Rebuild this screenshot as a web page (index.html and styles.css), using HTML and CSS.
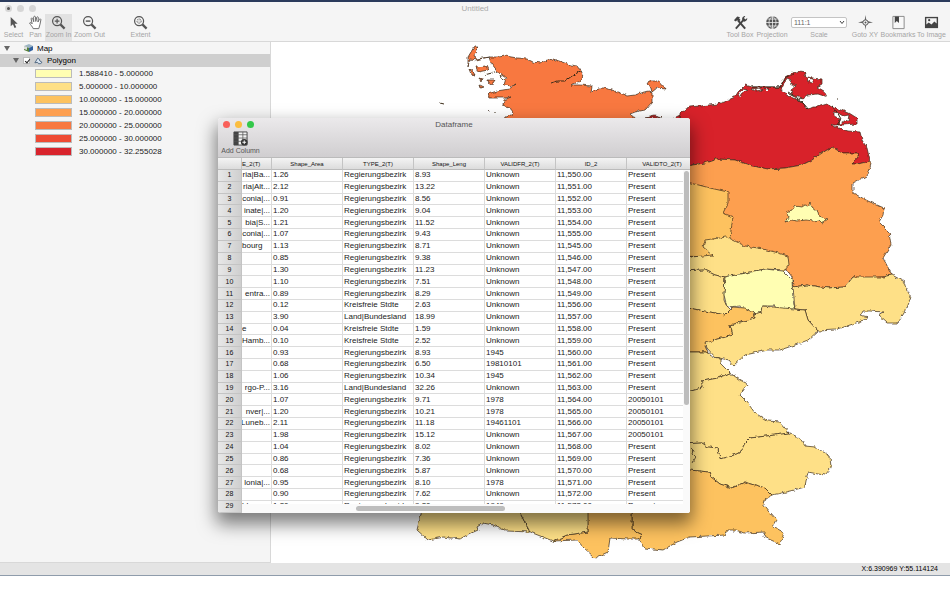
FILE: index.html
```html
<!doctype html>
<html lang="en">
<head>
    <meta charset="UTF-8">
    <meta name="viewport" content="width=device-width, initial-scale=1.0">
    <title>Untitled</title>
    <link rel="stylesheet" href="styles.css">
</head>
<body>
<div class="app">
    <header class="titlebar">
        <div class="lights inactive"><span class="dirty"></span><span></span><span></span></div>
        <h1>Untitled</h1>
    </header>
    <div class="toolbar">
        <button class="tool w-select">
            <svg viewBox="0 0 16 16"><path d="M5 2v10l2.400-2.200 1.700 4 1.800-.8-1.700-3.800h3.200z" fill="#555"/></svg>
            Select
        </button>
        <button class="tool w-pan">
            <svg viewBox="0 0 16 16"><path d="M5.500 14.500c-.5-2-3-4-3.800-6 .6-1 1.800-.4 2.700.9L3.300 4c.2-1.200 1.500-1 1.800 0l1 3.200L6 2.200C6.300 1 7.700 1 8 2.200l.3 4.700 1-4.400c.5-1 1.700-.7 1.700.4L10.600 7.500l1.600-3c.6-.8 1.700-.3 1.500.8-.6 3-1 6-2.200 9.200z" fill="#fff" stroke="#666"/></svg>
            Pan
        </button>
        <button class="tool w-zoom active">
            <svg viewBox="0 0 16 16"><circle cx="6.500" cy="6.500" r="4.800" fill="none" stroke="#555" stroke-width="1.300"/><path d="M4 6.500h5M6.500 4v5" stroke="#555" stroke-width="1.300"/><path d="M10 10l4.500 4.500" stroke="#555" stroke-width="2.400"/></svg>
            Zoom In
        </button>
        <button class="tool w-out">
            <svg viewBox="0 0 16 16"><circle cx="6.500" cy="6.500" r="4.800" fill="none" stroke="#555" stroke-width="1.300"/><path d="M4 6.500h5" stroke="#555" stroke-width="1.500"/><path d="M10 10l4.500 4.500" stroke="#555" stroke-width="2.400"/></svg>
            Zoom Out
        </button>
        <button class="tool w-extent">
            <svg viewBox="0 0 16 16"><circle cx="6.500" cy="6.500" r="4.800" fill="none" stroke="#555" stroke-width="1.300"/><circle cx="6.500" cy="6.500" r="2.300" fill="#ddd" stroke="#666" stroke-dasharray="1.500 1"/><path d="M10 10l4.500 4.500" stroke="#555" stroke-width="2.400"/></svg>
            Extent
        </button>
        <span class="spacer"></span>
        <button class="tool w-box">
            <svg viewBox="0 0 16 16"><path d="M3 14.500l8-9" stroke="#444" stroke-width="2"/><path d="M5.500 6l7.500 8.500" stroke="#444" stroke-width="2.200"/><path d="M1 5.500l3.500-4 3 1-1 1 1.500 1.700-2 1.800-1.700-1.500-1.300 1.500zM10 5.500c-1-2 1-4.500 3-4.300l-1.300 2 1.500 1.500 2-1.500c.3 2.500-2 4.300-4 3.800z" fill="#444"/></svg>
            Tool Box
        </button>
        <button class="tool w-proj">
            <svg viewBox="0 0 16 16"><circle cx="8" cy="8" r="6.800" fill="#555"/><path d="M1 8h14M2.500 4.300h11M2.500 11.700h11M8 1v14M8 1c-5 4-5 10 0 14M8 1c5 4 5 10 0 14" fill="none" stroke="#f4f4f4" stroke-width=".8"/></svg>
            Projection
        </button>
        <div class="tool w-scale">
            <div class="scale-box">
                <select id="scale"><option>111:1</option></select>
                <svg viewBox="0 0 8 8"><path d="M2 3l2 2.500L6 3" fill="none" stroke="#444"/></svg>
            </div>
            <label for="scale">Scale</label>
        </div>
        <button class="tool w-goto">
            <svg viewBox="0 0 16 16"><path d="M8 0l1 6 7 2-7 1-1 7-1-7-7-1 7-2z" fill="#666"/><circle cx="8" cy="8" r="2.800" fill="#f4f4f4" stroke="#555"/><circle cx="8" cy="8" r="1" fill="#555"/></svg>
            Goto XY
        </button>
        <button class="tool w-mark">
            <svg viewBox="0 0 16 16"><path d="M2 1.500h12v13H2z" fill="#f8f8f8" stroke="#888"/><path d="M4 1.500h4.500v7L6.200 6.500 4 8.500z" fill="#444"/></svg>
            Bookmarks
        </button>
        <button class="tool w-image">
            <svg viewBox="0 0 16 16"><path d="M1 2h14v12H1z" fill="#444"/><path d="M2.500 3.500h11V9L11 7l-3 3-3-2-2.500 2z" fill="#f4f4f4"/><circle cx="5.500" cy="5.500" r="1.200" fill="#444"/></svg>
            To Image
        </button>
    </div>

    <main class="content">
        <aside class="layers">
            <div class="node root">
                <span class="arrow"></span>
                <svg class="cube" viewBox="0 0 10 8"><path d="M1 2l5-2 4 2-4 2z" fill="#9cb4c4"/><path d="M1 2l5 2v4L1 6z" fill="#557f3c"/><path d="M1 2l3 1v3L1 5z" fill="#ddd"/><path d="M6 4l4-2v4L6 8z" fill="#2f5f9e"/></svg>
                <span>Map</span>
            </div>
            <div class="node layer">
                <span class="arrow"></span>
                <input type="checkbox" id="polygon" checked>
                <svg class="shape" viewBox="0 0 10 8"><path d="M1 6l3-5 2 1 .5 2L9 5.500 7 7H5L4 5.500z" fill="#dbe6f2" stroke="#47617c"/></svg>
                <label for="polygon">Polygon</label>
            </div>
            <ul class="legend">
                <li><i class="c1"></i>1.588410 - 5.000000</li>
                <li><i class="c2"></i>5.000000 - 10.000000</li>
                <li><i class="c3"></i>10.000000 - 15.000000</li>
                <li><i class="c4"></i>15.000000 - 20.000000</li>
                <li><i class="c5"></i>20.000000 - 25.000000</li>
                <li><i class="c6"></i>25.000000 - 30.000000</li>
                <li><i class="c7"></i>30.000000 - 32.255028</li>
            </ul>
        </aside>
        <section class="map">
            <svg viewBox="271 42 679 521" preserveAspectRatio="xMinYMin slice">
                <defs>
                    <filter id="coast" x="-5%" y="-5%" width="110%" height="110%">
                        <feTurbulence type="fractalNoise" baseFrequency=".22" numOctaves="2" seed="4"/>
                        <feDisplacementMap in="SourceGraphic" scale="4" xChannelSelector="R" yChannelSelector="G"/>
                    </filter>
                </defs>
                <g class="regions" filter="url(#coast)">
                    <!-- Schleswig-Holstein -->
                    <path class="c5" d="M489 57L497 57 506 56 517 58 527 59 533 62 540 63 543 61 553 59 562 62 570 65 577 66 580 70 583 74 582 80 576 83 571 85 580 85 592 86 591 94 597 88 604 88 612 90 620 93 627 96 635 95 643 92 650 91 652 93 652 102 645 110 635 112 630 114 632 117 640 120V130H500L504 118 513 114 510 107 503 105 504 100 511 97 505 98 490 98 488 94 497 91 509 89 516 84 512 86 504 85 506 78 500 74 495 68 491 63z"/>
                    <path class="c5" d="M652 92L651 87 647 84 649 81 659 81 666 89 657 88z"/>
                    <path class="c5" d="M474 47L479 47 476 50 474 55 476 59 489 57 476 60 470 59 468 66 468 57z"/>
                    <path class="c5" d="M476 67l10-1 2 4-10 2zM469 69l3 1 3 5-4-1zM488 80l7 0-2 3-4 1zM479 78l3 1-1 3zM480 85l4 2-3 1z"/>
                    <path class="line thick" d="M551 83L558 81 565 81 572 76 582 70M484 75l8-2 5-2M440 103l4 1M488 110l2 1M494 112l2 0M500 75l3 5"/>
                    <!-- Mecklenburg-Vorpommern -->
                    <path class="c7" d="M680 112L690 107 700 106 718 104 726 101 735 97 738 92 745 85 752 87 780 87 782 83 785 77 792 73 800 71 806 72 804 76 812 78 822 79 822 84 817 87 824 91 827 97 818 94 808 95 803 99 797 98 803 103 808 109 812 107 817 107 827 104 830 105 838 109 849 113 857 118 857 124 842 125 832 125 838 128 848 131 860 132 862 140 867 148 870 161 858 164 852 164 858 157 858 153 842 153 832 147 822 153 812 160 802 165 785 168 768 169 752 166 735 160 717 159 705 163 680 167z"/>
                    <path class="water" d="M738 95l4-6 6 1-6 3-3 4zM752 89l8-1 3 2-8 1zM764 89l6 0-3 3zM784 84l3-6 4 2-1 4 6 2-5 4 1 5 9 3-3 2-10-4-7-6zM807 78l5 1 2 5-6-3zM834 112l4 1 5 3 6-1-1 5-5 2-4 3 1-6-6-3z"/>
                    <path class="c7" d="M645 118l9-2 8 2zM672 119l8-4v5z"/>
                    <path class="line thick" d="M780 87l6-10 8-3M789 94l8 4 6 5 5 6M832 106l5 6 4 7-4 6M788 92l5 3M837 99h1M752 87h30"/>
                    <!-- Brandenburg, Berlin -->
                    <path class="c4" d="M680 167L705 163 717 159 735 160 752 166 768 169 785 168 802 165 812 160 822 153 832 147 842 153 858 153 858 157 852 164 858 164 870 161 871 164 868 175 853 183 853 193 868 201 884 208 883 215 879 222 889 232 891 245 883 258 892 275 883 277 867 278 853 277 845 287 828 288 807 285 793 287 792 277 787 270 680 260z"/>
                    <path class="c1" d="M785 222L788 217 787 212 792 210 795 206 801 207 804 205 808 206 810 203 812 207 818 212 819 216 828 219 822 223 819 220 813 221 806 220 798 221 791 220z"/>
                    <!-- Niedersachsen, Sachsen-Anhalt -->
                    <path class="c3" d="M680 180L691 183 710 188 728 192 728 203 723 213 733 217 730 238 713 257 680 256z"/>
                    <path class="c2" d="M680 256L691 257 713 255 703 247 705 240 727 237 745 246 758 248 775 252 788 256 789 265 785 270 765 269 745 273 725 277 715 275 705 270 680 271z"/>
                    <path class="c2" d="M680 271L705 270 715 275 725 277 724 300 727 307 730 310 725 315 700 310 680 307z"/>
                    <path class="c1" d="M725 277L745 273 765 269 783 271 792 280 793 300 795 310 775 309 775 306 763 306 760 313 753 314 740 306 727 307 724 295z"/>
                    <!-- Sachsen, Thueringen -->
                    <path class="c3" d="M680 307L700 310 725 315 730 310 733 307 745 308 755 314 755 318 730 325 733 335 715 340 705 345 708 352 680 352z"/>
                    <path class="c2" d="M793 287L807 285 828 288 845 287 853 277 883 277 892 275 905 282 908 292 911 297 907 308 898 323 887 323 878 315 883 312 870 311 862 311 860 315 868 317 862 321 835 330 818 331 808 320 805 310 795 309z"/>
                    <path class="c2" d="M755 314L761 312 762 306 783 308 805 310 808 320 818 331 808 340 795 345 780 350 768 350 745 355 733 366 728 360 715 357 707 348 705 343 715 340 733 335 730 325 755 318z"/>
                    <!-- Bayern -->
                    <path class="c2" d="M680 352L708 352 712 357 720 358 720 363 730 373 718 378 702 381 702 388 680 394z"/>
                    <path class="c2" d="M730 373L740 380 748 384 740 395 747 402 755 413 768 421 780 422 789 433 775 435 750 438 745 443 740 453 720 459 718 448 708 447 702 443 680 444V394L702 388 702 381 718 378z"/>
                    <path class="c2" d="M789 433L800 438 805 446 815 447 830 456 831 468 825 475 818 474 808 472 805 487 790 491 772 495 765 488 745 482 732 488 720 484 711 477 709 472 680 469V444L702 443 708 447 718 448 720 459 740 453 745 443 750 438 775 435z"/>
                    <path class="line" d="M691 448l3 3-1 3 3 3-4 6"/>
                    <path class="c3" d="M632 500V513L632 530 643 535 637 538 645 548 663 550 677 542 690 537 725 535 728 530 735 530 745 533 765 532 764 537 780 544 784 533 773 527 777 520 770 512 762 502 772 495 765 488 745 482 732 488 720 484 711 477 709 472 680 469z"/>
                    <path class="c3" d="M587 500L588 532 567 535 553 541 577 540 583 547 595 558 608 552 610 538 627 539 637 539 643 535 632 530V500z"/>
                    <!-- Baden-Wuerttemberg -->
                    <path class="c2" d="M422 510L417 530 428 540 443 537 460 539 467 535 478 530 477 527 483 523 493 525 507 531 530 532 520 513V500H422z"/>
                    <path class="c2" d="M520 500V513L530 532 553 541 567 535 588 532V500z"/>
                </g>
            </svg>
        </section>
    </main>
    <footer class="status">X:6.390969 Y:55.114124</footer>

    <section class="dialog">
        <header class="dialog-head">
            <div class="titlebar">
                <div class="lights"><span class="red"></span><span class="yellow"></span><span class="green"></span></div>
                <h2>Dataframe</h2>
            </div>
            <button class="add">
                <svg viewBox="0 0 16 16"><path d="M1 1h14v14H1z" fill="#f2f2f2" stroke="#444"/><path d="M1 1h5v14H1z" fill="#444"/><path d="M1 4h14M1 7.500h14M1 11h14M10.500 1v14" stroke="#555" stroke-width=".8"/><circle cx="12" cy="12" r="3.500" fill="#333"/><path d="M12 10v4M10 12h4" stroke="#fff"/></svg>
                Add Column
            </button>
        </header>
        <div class="sheet">
            <table>
                <thead>
                <tr>
                    <th class="num"></th>
                    <th class="name">E_2(T)</th>
                    <th>Shape_Area</th>
                    <th>TYPE_2(T)</th>
                    <th>Shape_Leng</th>
                    <th>VALIDFR_2(T)</th>
                    <th>ID_2</th>
                    <th>VALIDTO_2(T)</th>
                </tr>
                </thead>
                <tbody id="rows"></tbody>
            </table>
            <div class="track-v"><span></span></div>
            <div class="track-h"><span></span></div>
        </div>
    </section>
</div>
<script src="script.js"></script>
</body>
</html>
```
FILE: styles.css
```css
* {
    box-sizing: border-box;
    margin: 0;
    padding: 0;
    list-style: none;
}

body {
    font-family: "Liberation Sans", Arial, sans-serif;
    font-size: 8px;
    color: #222;
    background-color: #fff;
}

button {
    border: 0;
    background: none;
    font-family: inherit;
}

.app {
    position: relative;
    display: flex;
    flex-direction: column;
    height: calc(100vh - 18px);
    border-top: 2px solid #2b3b5c;
    border-bottom: 1px solid #8f9cab;
    background-color: #f5f5f5;
}

/* title bars */
.titlebar {
    display: grid;
    grid-template-columns: 60px 1fr 60px;
    align-items: center;
    height: 12px;
    padding: 0 5px;
}

.titlebar h1,
.titlebar h2 {
    font-size: 8px;
    font-weight: normal;
    text-align: center;
    color: #555;
}

.titlebar h1 {
    color: #aaa;
}

.lights {
    display: flex;
    gap: 5px;
}

.lights span {
    width: 7px;
    height: 7px;
    border-radius: 50%;
}

.lights.inactive span {
    background-color: #d6d6d6;
}

.lights.inactive .dirty {
    border: 2px solid #d6d6d6;
    background-color: #555;
}

.lights .red {
    background-color: #f9605a;
}

.lights .yellow {
    background-color: #fbbd3f;
}

.lights .green {
    background-color: #34c84a;
}

/* toolbar */
.toolbar {
    display: flex;
    height: 28px;
    padding: 0 3px 0 1px;
    border-bottom: 1px solid #d8d8d8;
}

.spacer {
    flex: 1;
}

.tool {
    display: flex;
    flex-direction: column;
    align-items: center;
    gap: 1px;
    padding-top: 1px;
    font-size: 7px;
    line-height: 8px;
    white-space: nowrap;
    color: #a5a5a5;
}

.tool > svg {
    width: 15px;
    height: 15px;
}

.tool.active {
    background-color: #e2e2e2;
}

.w-select {
    width: 25px;
}

.w-pan {
    width: 19px;
}

.w-zoom {
    width: 27px;
}

.w-out {
    width: 35px;
}

.w-extent {
    width: 27px;
    margin-left: 20px;
}

.w-box,
.w-proj {
    width: 32px;
}

.w-scale {
    width: 62px;
}

.w-goto {
    width: 30px;
}

.w-mark {
    width: 36px;
}

.w-image {
    width: 31px;
}

.scale-box {
    position: relative;
    width: 56px;
    height: 15px;
    padding: 2px 0;
}

.scale-box select {
    display: block;
    width: 100%;
    height: 11px;
    padding-left: 2px;
    appearance: none;
    border: 1px solid #c4c4c4;
    border-radius: 2px;
    background-color: #fff;
    font: 7px "Liberation Sans", Arial, sans-serif;
    color: #666;
}

.scale-box svg {
    position: absolute;
    top: 3px;
    right: 1px;
    width: 8px;
    height: 8px;
}

/* layer tree */
.content {
    flex: 1;
    display: flex;
    min-height: 0;
}

.layers {
    width: 271px;
    border-right: 1px solid #d8d8d8;
    border-bottom: 1px solid #d8d8d8;
}

.node {
    display: flex;
    align-items: center;
    gap: 4px;
    height: 13px;
    color: #000;
}

.root {
    height: 12px;
    padding-left: 4px;
}

.layer {
    padding-left: 13px;
    background-color: #cfcfcf;
}

.arrow {
    border: 3px solid transparent;
    border-top: 5px solid #666;
    border-bottom: 0;
}

.cube {
    width: 10px;
    height: 8px;
    margin-left: 9px;
}

.shape {
    width: 9px;
    height: 8px;
}

.layer input {
    position: relative;
    width: 7px;
    height: 7px;
    appearance: none;
    border: 1px solid #bbb;
    background-color: #fff;
}

.layer input:checked::after {
    content: "";
    position: absolute;
    left: 2px;
    width: 2px;
    height: 4px;
    border: solid #222;
    border-width: 0 1px 1px 0;
    transform: rotate(40deg);
}

.legend li {
    display: flex;
    align-items: center;
    gap: 7px;
    height: 13px;
    padding-left: 35px;
}

.legend i {
    width: 37px;
    height: 9px;
    border: 1px solid #bbb;
}

.legend .c1 { background-color: #fffeb2; }
.legend .c2 { background-color: #fee087; }
.legend .c3 { background-color: #fdc25f; }
.legend .c4 { background-color: #fd9f50; }
.legend .c5 { background-color: #f87840; }
.legend .c6 { background-color: #ee4a33; }
.legend .c7 { background-color: #d8232c; }

/* map */
.map {
    flex: 1;
    overflow: hidden;
    background-color: #fff;
}

.map svg {
    display: block;
    width: 100%;
    height: 100%;
}

.regions path {
    stroke: #3a2a18;
    stroke-width: .7;
    stroke-linejoin: round;
}

.regions .c1 { fill: #fffeb2; }
.regions .c2 { fill: #fee087; }
.regions .c3 { fill: #fdc25f; }
.regions .c4 { fill: #fd9f50; }
.regions .c5 { fill: #f87840; }
.regions .c7 { fill: #d8232c; }
.regions .water { fill: #fff; }
.regions .line { fill: none; }
.regions .thick { stroke-width: 1; }

.status {
    height: 12px;
    padding-right: 12px;
    background-color: #e4e4e4;
    font-size: 7px;
    line-height: 12px;
    text-align: right;
    color: #000;
}

/* dataframe window */
.dialog {
    position: absolute;
    top: 116px;
    left: 218px;
    display: flex;
    flex-direction: column;
    width: 472px;
    height: 395px;
    border-radius: 3px;
    overflow: hidden;
    background-color: #fff;
    box-shadow: 0 9px 18px 2px rgba(0, 0, 0, .5);
}

.dialog-head {
    height: 40px;
    border-bottom: 1px solid #bbb;
    background-image: linear-gradient(#ebe9eb, #d0ced0);
}

.dialog .titlebar {
    height: 13px;
}

.add {
    display: flex;
    flex-direction: column;
    align-items: center;
    width: 45px;
    font-size: 7px;
    line-height: 9px;
    color: #555;
}

.add svg {
    width: 15px;
    height: 15px;
}

.sheet {
    position: relative;
    flex: 1;
    overflow: hidden;
}

/* the rows share out the height of the table */
table {
    width: 479px;
    height: 355px;
    table-layout: fixed;
    border-collapse: separate;
    border-spacing: 0;
}

th {
    width: 71px;
    height: 12px;
    border-right: 1px solid #c4c4c4;
    border-bottom: 1px solid #bbb;
    background-image: linear-gradient(#f4f4f4, #dcdcdc);
    font-size: 6px;
    font-weight: normal;
    line-height: 8px;
    color: #111;
}

td {
    height: 11px;
    padding-left: 1px;
    border-right: 1px solid #dcdcdc;
    border-bottom: 1px solid #dcdcdc;
    font-size: 8px;
    line-height: 10px;
    white-space: nowrap;
    overflow: hidden;
}

.num {
    width: 24px;
}

tbody .num {
    height: 11px;
    border-color: #c4c4c4;
    background-image: linear-gradient(to right, #e8e8e8, #cfcfcf);
    font-size: 7px;
}

.name {
    width: 30px;
    padding: 0;
    text-align: left;
}

.name div {
    display: flex;
    overflow: hidden;
}

.name .cut {
    justify-content: flex-end;
    padding-right: 1px;
}

.track-v,
.track-h {
    position: absolute;
    background-color: #fafafa;
}

.track-v {
    top: 12px;
    right: 0;
    bottom: 0;
    width: 7px;
    padding: 1px;
}

.track-h {
    left: 24px;
    right: 0;
    bottom: 0;
    height: 9px;
    padding: 2px 0 2px 114px;
}

.track-v span,
.track-h span {
    display: block;
    border-radius: 3px;
    background-color: #bdbdbd;
}

.track-v span {
    width: 5px;
    height: 234px;
}

.track-h span {
    width: 149px;
    height: 5px;
}
```
FILE: script.js
```javascript
// name, area, type, length, valid from, id, valid to
let R = 'Regierungsbezirk';
let K = 'Kreisfreie Stdte';
let L = 'Land|Bundesland';
let data = [
    ['ria|Ba...', '1.26', R, '8.93', 'Unknown', '11,550.00', 'Present'],
    ['ria|Alt...', '2.12', R, '13.22', 'Unknown', '11,551.00', 'Present'],
    ['conia|...', '0.91', R, '8.56', 'Unknown', '11,552.00', 'Present'],
    ['inate|...', '1.20', R, '9.04', 'Unknown', '11,553.00', 'Present'],
    ['bia|S...', '1.21', R, '11.52', 'Unknown', '11,554.00', 'Present'],
    ['conia|...', '1.07', R, '9.43', 'Unknown', '11,555.00', 'Present'],
    ['bourg', '1.13', R, '8.71', 'Unknown', '11,545.00', 'Present'],
    ['', '0.85', R, '9.38', 'Unknown', '11,546.00', 'Present'],
    ['', '1.30', R, '11.23', 'Unknown', '11,547.00', 'Present'],
    ['', '1.10', R, '7.51', 'Unknown', '11,548.00', 'Present'],
    ['entra...', '0.89', R, '8.29', 'Unknown', '11,549.00', 'Present'],
    ['', '0.12', K, '2.63', 'Unknown', '11,556.00', 'Present'],
    ['', '3.90', L, '18.99', 'Unknown', '11,557.00', 'Present'],
    ['e', '0.04', K, '1.59', 'Unknown', '11,558.00', 'Present'],
    ['Hamb...', '0.10', K, '2.52', 'Unknown', '11,559.00', 'Present'],
    ['', '0.93', R, '8.93', '1945', '11,560.00', 'Present'],
    ['', '0.68', R, '6.50', '19810101', '11,561.00', 'Present'],
    ['', '1.06', R, '10.34', '1945', '11,562.00', 'Present'],
    ['rgo-P...', '3.16', L, '32.26', 'Unknown', '11,563.00', 'Present'],
    ['', '1.07', R, '9.71', '1978', '11,564.00', '20050101'],
    ['nver|...', '1.20', R, '10.21', '1978', '11,565.00', '20050101'],
    ['Luneb...', '2.11', R, '11.18', '19461101', '11,566.00', '20050101'],
    ['', '1.98', R, '15.12', 'Unknown', '11,567.00', '20050101'],
    ['', '1.04', R, '8.02', 'Unknown', '11,568.00', 'Present'],
    ['', '0.86', R, '7.36', 'Unknown', '11,569.00', 'Present'],
    ['', '0.68', R, '5.87', 'Unknown', '11,570.00', 'Present'],
    ['lonia|...', '0.95', R, '8.10', '1978', '11,571.00', 'Present'],
    ['', '0.90', R, '7.62', 'Unknown', '11,572.00', 'Present'],
    ['bl', '1.20', R, '9.20', '1949', '11,573.00', 'Present']
];

let rows = document.getElementById('rows');
data.forEach(function (item, i) {
    let html = '<th class="num">' + (i + 1) + '</th>';
    item.forEach(function (text, col) {
        if (col === 0) {
            let cut = text.indexOf('...') > -1 ? ' class="cut"' : '';
            html += '<td class="name"><div' + cut + '>' + text + '</div></td>';
        } else {
            html += '<td>' + text + '</td>';
        }
    });
    let tr = document.createElement('tr');
    tr.innerHTML = html;
    rows.appendChild(tr);
});
```
